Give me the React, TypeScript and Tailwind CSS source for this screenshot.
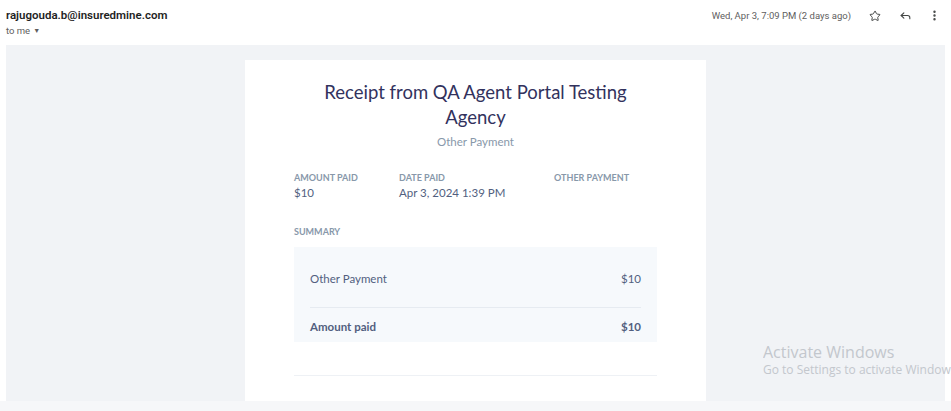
import { Star, Reply, MoreVertical } from "lucide-react";

const details = [
  { label: "Amount paid", value: "$10", width: "w-[105px]" },
  { label: "Date paid", value: "Apr 3, 2024 1:39 PM", width: "w-[155px]" },
  { label: "Other Payment", value: "", width: "flex-1" },
];

export default function App() {
  return (
    <div className="relative w-[951px] h-[411px] overflow-hidden bg-white">
      {/* Mail header */}
      <div className="flex h-[45px] items-start justify-between pl-[6px] pr-[10px] pt-[8px] font-['Roboto',sans-serif]">
        <div>
          <div className="text-[11.5px] font-semibold leading-[15px] text-[#1f1f1f]">
            rajugouda.b@insuredmine.com
          </div>
          <div className="mt-[2px] flex items-center gap-[3px] text-[9.5px] leading-[12px] text-[#5e5e5e]">
            to me
            <span className="text-[7px]">▼</span>
          </div>
        </div>
        <div className="flex items-center text-[#444746]">
          <span className="mr-[18px] text-[9.5px] leading-[15px] text-[#5e5e5e]">
            Wed, Apr 3, 7:09 PM (2 days ago)
          </span>
          <Star size={12} strokeWidth={2} className="mr-[18px]" />
          <Reply size={13} strokeWidth={2} className="mr-[16px]" />
          <MoreVertical size={13} strokeWidth={2.5} />
        </div>
      </div>

      {/* Message body */}
      <div className="ml-[6px] h-[356px] w-[939px] bg-[#f1f3f6] pt-[15px] font-['Lato',sans-serif]">
        <div className="ml-[239px] h-[341px] w-[461px] bg-white px-[49px] pt-[20px]">
          <h1 className="mx-auto w-[320px] text-center text-[18.5px] leading-[25px] font-normal text-[#32325d]">
            Receipt from QA Agent Portal Testing Agency
          </h1>
          <div className="mt-[4px] text-center text-[11.5px] leading-[16px] text-[#8898aa]">
            Other Payment
          </div>

          <div className="mt-[21px] flex">
            {details.map((d) => (
              <div key={d.label} className={d.width}>
                <div className="text-[9px] font-bold uppercase leading-[14px] text-[#8898aa]">
                  {d.label}
                </div>
                <div className="text-[11.5px] leading-[16px] text-[#525f7f]">{d.value}</div>
              </div>
            ))}
          </div>

          <div className="mt-[24px] text-[9px] font-bold uppercase leading-[14px] text-[#8898aa]">
            Summary
          </div>

          <div className="mt-[8px] h-[95px] bg-[#f6f9fc] px-[16px] pt-[24px]">
            <div className="flex justify-between text-[11.5px] leading-[16px] text-[#525f7f]">
              <span>Other Payment</span>
              <span>$10</span>
            </div>
            <div className="mt-[20px] h-px bg-[#e6ebf1]" />
            <div className="mt-[11px] flex justify-between text-[11.5px] font-bold leading-[16px] text-[#525f7f]">
              <span>Amount paid</span>
              <span>$10</span>
            </div>
          </div>

          <div className="mt-[33px] h-px bg-[#eef1f5]" />
        </div>
      </div>
      <div className="h-[10px] bg-[#f6f7f9]" />

      {/* OS watermark */}
      <div className="absolute left-[763px] top-[342px] w-[188px] overflow-hidden font-['Segoe_UI','Open_Sans',sans-serif] whitespace-nowrap text-[#c3c7cd]">
        <div className="text-[16px] leading-[20px]">Activate Windows</div>
        <div className="text-[12px] leading-[16px]">Go to Settings to activate Windows.</div>
      </div>
    </div>
  );
}
